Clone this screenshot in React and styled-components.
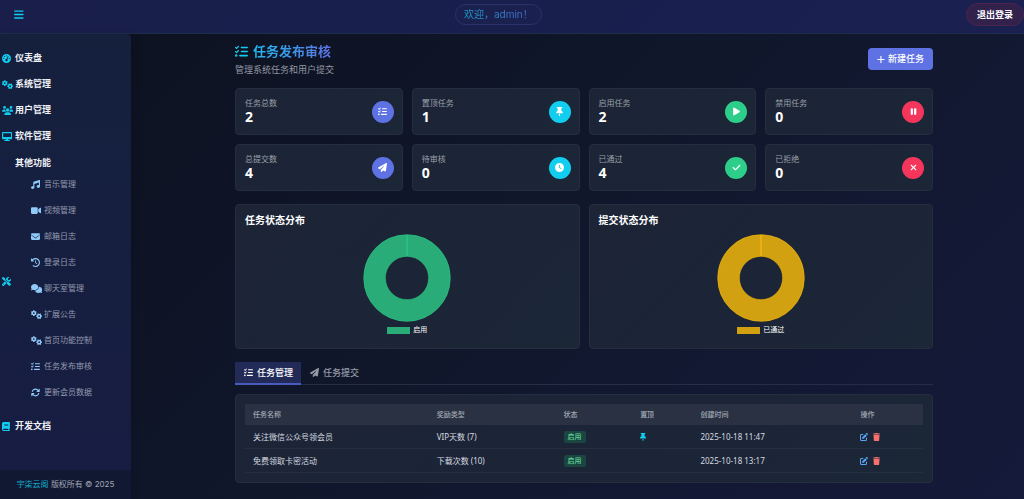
import React from "react";
import styled, { createGlobalStyle } from "styled-components";
import {
  FaBars, FaGaugeHigh, FaGears, FaUsers, FaDesktop, FaScrewdriverWrench, FaMusic, FaVideo,
  FaEnvelope, FaClockRotateLeft, FaComments, FaListCheck, FaArrowsRotate, FaBook, FaPaperPlane,
  FaThumbtack, FaPlay, FaPause, FaClock, FaCheck, FaXmark, FaPlus, FaPenToSquare, FaTrash,
} from "react-icons/fa6";

const GlobalStyle = createGlobalStyle`
  * { box-sizing: border-box; }
  body {
    margin: 0;
    color: #fff;
    background: #0d1220;
    font: 9px/12px "Noto Sans", "Noto Sans CJK SC", sans-serif;
  }
  button { font: inherit; color: inherit; border: 0; padding: 0; background: none; cursor: pointer; }
  a { color: inherit; text-decoration: none; }
  ul { list-style: none; margin: 0; padding: 0; }
  h1, h2, p { margin: 0; }
  svg { display: block; flex: none; }
`;

const Page = styled.div`
  min-height: 100vh;
  display: flex;
  flex-direction: column;
  background: linear-gradient(135deg, #0c111e 0%, #10172b 50%, #151a3a 100%);
`;

const TopBar = styled.header`
  display: flex;
  justify-content: space-between;
  align-items: center;
  padding: 3px 0 7px 7px;
  background: linear-gradient(135deg, #191f4a, #1a2050);
  border-bottom: 1px solid #1d2d4c;
  font-family: Inter, "Noto Sans CJK SC", sans-serif;
`;

const MenuButton = styled.button`
  padding: 6px 7px;
  color: #11cdef;
  svg { height: 11px; width: auto; aspect-ratio: 7 / 8; }
`;

const Welcome = styled.div`
  padding: 0 8px;
  border: 1px solid #2a336e;
  border-radius: 11px;
  background: #1a214e;
  font-size: 10px;
  line-height: 19px;
  span {
    background: linear-gradient(90deg, #1f9dc9, #4a62cc);
    background-clip: text;
    color: transparent;
  }
`;

const Logout = styled.button`
  padding: 0 10px;
  border: 1px solid #4b2450;
  border-radius: 12px;
  background: #31214b;
  font-size: 9px;
  font-weight: 700;
  line-height: 21px;
`;

const Body = styled.div`
  flex: 1;
  display: flex;
`;

const Sidebar = styled.aside`
  flex: 0 0 131px;
  display: flex;
  flex-direction: column;
  border-top-right-radius: 4px;
  background: linear-gradient(180deg, #15203d, #171d43);
  box-shadow: 2px 0 8px rgba(0, 0, 0, 0.12);
  font-family: Inter, "Noto Sans CJK SC", sans-serif;
`;

const Menu = styled.ul`
  flex: 1;
  padding: 11px 0 24px 2px;
`;

const MenuIcon = styled.span`
  width: 13px;
  color: #11cdef;
  svg { height: 9px; width: auto; aspect-ratio: ${(p) => p.$ratio || "1"}; }
`;

const MenuLink = styled.a`
  display: flex;
  align-items: center;
  height: 26px;
  font-weight: 700;
  color: #f0f2f7;
`;

const MenuGroup = styled.div`
  display: flex;
  align-items: center;
`;

const GroupLabel = styled.button`
  display: block;
  padding: 8px 0 2px;
  font-weight: 700;
  color: #f0f2f7;
`;

const SubMenu = styled.ul`
  padding: 0 0 8px 16px;
`;

const SubLink = styled.a`
  display: flex;
  align-items: center;
  height: 26px;
  font-size: 8px;
  color: #949bb0;
`;

const SubIcon = styled(MenuIcon)`
  color: #90caf9;
`;

const Copyright = styled.footer`
  padding: 8px 0 9px;
  text-align: center;
  font-size: 8px;
  background: #111831;
  color: #a2a7b5;
  a { color: #10a9cb; }
`;

const Main = styled.main`
  flex: 1;
  min-width: 0;
  padding: 8px 91px 16px 104px;
`;

const PageHead = styled.div`
  display: flex;
  justify-content: space-between;
  align-items: center;
  margin-bottom: 12px;
`;

const Title = styled.h1`
  display: flex;
  align-items: center;
  gap: 5px;
  margin-bottom: 3px;
  font-size: 13px;
  line-height: 18px;
  font-weight: 600;
  svg { height: 13px; width: auto; color: #11cdef; }
  span {
    background: linear-gradient(90deg, #22b8ee, #5e72e4);
    background-clip: text;
    color: transparent;
  }
`;

const Subtitle = styled.p`
  line-height: 13px;
  color: #9398a3;
`;

const PrimaryButton = styled.button`
  display: flex;
  align-items: center;
  gap: 3px;
  padding: 5px 9px;
  border-radius: 4px;
  background: #5e72e4;
  font-weight: 500;
  svg { height: 9px; width: auto; aspect-ratio: 7 / 8; }
`;

const Panel = styled.section`
  border: 1px solid #252e3f;
  border-radius: 4px;
  padding: 9px;
  background: linear-gradient(135deg, #1c2436, #1b2637);
`;

const StatGrid = styled.div`
  display: grid;
  grid-template-columns: repeat(4, 1fr);
  gap: 9px;
  margin-bottom: 13px;
`;

const StatCard = styled(Panel)`
  display: flex;
  justify-content: space-between;
  align-items: center;
  padding-right: 8px;
`;

const StatLabel = styled.div`
  font-size: 8px;
  line-height: 10px;
  color: #9ba0aa;
`;

const StatValue = styled.div`
  font-size: 14px;
  line-height: 17px;
  font-weight: 700;
`;

const StatIcon = styled.span`
  display: grid;
  place-items: center;
  width: 22px;
  height: 22px;
  border-radius: 50%;
  background: ${(p) => p.$color};
  svg { height: 9px; width: auto; }
`;

const ChartGrid = styled.div`
  display: grid;
  grid-template-columns: repeat(2, 1fr);
  gap: 9px;
  margin-bottom: 13px;
`;

const ChartCard = styled(Panel)`
  padding-bottom: 13px;
`;

const ChartTitle = styled.h2`
  margin-bottom: 7px;
  font-size: 10px;
  line-height: 13px;
  font-weight: 700;
`;

const Doughnut = styled.svg`
  width: 88px;
  height: 88px;
  margin: 0 auto;
`;

const Legend = styled.div`
  display: flex;
  justify-content: center;
  align-items: center;
  gap: 3px;
  margin-top: 3px;
  font-size: 7px;
  line-height: 10px;
`;

const Swatch = styled.span`
  width: 23px;
  height: 7px;
  background: ${(p) => p.$color};
`;

const Tabs = styled.div`
  display: flex;
  margin-bottom: 9px;
  box-shadow: inset 0 -1px #262d45;
`;

const Tab = styled.button`
  display: flex;
  align-items: center;
  gap: 4px;
  height: 23px;
  padding: 0 8px 0 9px;
  border-bottom: 2px solid ${(p) => (p.$active ? "#4a5bbf" : "transparent")};
  background: ${(p) => (p.$active ? "#222b58" : "none")};
  color: ${(p) => (p.$active ? "#fff" : "#9499a6")};
  font-weight: 500;
  svg { height: 9px; width: auto; }
`;

const Table = styled.table`
  width: 100%;
  table-layout: fixed;
  border-collapse: separate;
  border-spacing: 0;
  text-align: left;
  font-size: 8px;
  line-height: 11px;
  color: #d7dae0;
`;

const HeadCell = styled.th`
  width: ${(p) => p.$width};
  height: 21px;
  padding: 0 8px;
  background: #293143;
  color: #a4a9b3;
  font-size: 7px;
  font-weight: 500;
`;

const Cell = styled.td`
  height: 24px;
  padding: 0 8px;
  border-bottom: 1px solid #252f3f;
`;

const Badge = styled.span`
  display: inline-block;
  padding: 0 4px;
  border-radius: 2px;
  background: #1b4541;
  color: #62cf96;
  font-size: 7px;
  font-weight: 500;
  line-height: 12px;
  vertical-align: middle;
`;

const PinMark = styled.span`
  color: #11cdef;
  svg { height: 8px; width: auto; aspect-ratio: 3 / 4; }
`;

const Actions = styled.div`
  display: flex;
  gap: 5px;
`;

const ActionButton = styled.button`
  color: ${(p) => p.$color};
  svg { height: 8px; width: auto; aspect-ratio: ${(p) => p.$ratio || "1"}; }
`;

const mainLinks = [
  [FaGaugeHigh, "仪表盘"],
  [FaGears, "系统管理", "5 / 4"],
  [FaUsers, "用户管理", "5 / 4"],
  [FaDesktop, "软件管理", "9 / 8"],
];

const subLinks = [
  [FaMusic, "音乐管理"],
  [FaVideo, "视频管理", "9 / 8"],
  [FaEnvelope, "邮箱日志"],
  [FaClockRotateLeft, "登录日志"],
  [FaComments, "聊天室管理", "5 / 4"],
  [FaGears, "扩展公告", "5 / 4"],
  [FaGears, "首页功能控制", "5 / 4"],
  [FaListCheck, "任务发布审核"],
  [FaArrowsRotate, "更新会员数据"],
];

const stats = [
  ["任务总数", 2, FaListCheck, "#5e72e4"],
  ["置顶任务", 1, FaThumbtack, "#11cdef"],
  ["启用任务", 2, FaPlay, "#2dce89"],
  ["禁用任务", 0, FaPause, "#f5365c"],
  ["总提交数", 4, FaPaperPlane, "#5e72e4"],
  ["待审核", 0, FaClock, "#11cdef"],
  ["已通过", 4, FaCheck, "#2dce89"],
  ["已拒绝", 0, FaXmark, "#f5365c"],
];

const charts = [
  ["任务状态分布", "启用", "#2aac78", "#2dce89"],
  ["提交状态分布", "已通过", "#d1a112", "#ffc107"],
];

const columns = [
  ["任务名称", "27.1%"],
  ["奖励类型", "18.7%"],
  ["状态", "11.3%"],
  ["置顶", "8.9%"],
  ["创建时间", "23.6%"],
  ["操作", "10.4%"],
];

const tasks = [
  ["关注微信公众号领会员", "VIP天数 (7)", true, "2025-10-18 11:47"],
  ["免费领取卡密活动", "下载次数 (10)", false, "2025-10-18 13:17"],
];

function SideItem({ icon: Icon, label, ratio }) {
  return (
    <li>
      <MenuLink href="#"><MenuIcon $ratio={ratio}><Icon /></MenuIcon>{label}</MenuLink>
    </li>
  );
}

function Chart({ title, label, color, edge }) {
  return (
    <ChartCard>
      <ChartTitle>{title}</ChartTitle>
      <Doughnut viewBox="0 0 88 88" role="img" aria-label={title}>
        <circle cx="44" cy="44" r="32.5" fill="none" stroke={color} strokeWidth="22" />
        <circle cx="44" cy="44" r="43.3" fill="none" stroke={edge} strokeWidth="0.6" opacity="0.6" />
        <circle cx="44" cy="44" r="21.6" fill="none" stroke={edge} strokeWidth="0.6" opacity="0.6" />
        <path d="M44 1V22" stroke={edge} strokeWidth="1" />
      </Doughnut>
      <Legend><Swatch $color={color} />{label}</Legend>
    </ChartCard>
  );
}

export default function App() {
  return (
    <Page>
      <GlobalStyle />
      <TopBar>
        <MenuButton aria-label="菜单"><FaBars /></MenuButton>
        <Welcome><span>欢迎，admin！</span></Welcome>
        <Logout>退出登录</Logout>
      </TopBar>
      <Body>
        <Sidebar>
          <Menu>
            {mainLinks.map(([icon, label, ratio]) => (
              <SideItem key={label} icon={icon} label={label} ratio={ratio} />
            ))}
            <li>
              <MenuGroup>
                <MenuIcon><FaScrewdriverWrench /></MenuIcon>
                <div>
                  <GroupLabel>其他功能</GroupLabel>
                  <SubMenu>
                    {subLinks.map(([Icon, label, ratio]) => (
                      <li key={label}>
                        <SubLink href="#"><SubIcon $ratio={ratio}><Icon /></SubIcon>{label}</SubLink>
                      </li>
                    ))}
                  </SubMenu>
                </div>
              </MenuGroup>
            </li>
            <SideItem icon={FaBook} label="开发文档" ratio="7 / 8" />
          </Menu>
          <Copyright><a href="#">宇柒云阁</a> 版权所有 © 2025</Copyright>
        </Sidebar>
        <Main>
          <PageHead>
            <div>
              <Title><FaListCheck /><span>任务发布审核</span></Title>
              <Subtitle>管理系统任务和用户提交</Subtitle>
            </div>
            <PrimaryButton><FaPlus />新建任务</PrimaryButton>
          </PageHead>
          <StatGrid>
            {stats.map(([label, value, Icon, color]) => (
              <StatCard key={label}>
                <div>
                  <StatLabel>{label}</StatLabel>
                  <StatValue>{value}</StatValue>
                </div>
                <StatIcon $color={color}><Icon /></StatIcon>
              </StatCard>
            ))}
          </StatGrid>
          <ChartGrid>
            {charts.map(([title, label, color, edge]) => (
              <Chart key={title} title={title} label={label} color={color} edge={edge} />
            ))}
          </ChartGrid>
          <Tabs role="tablist">
            <Tab role="tab" aria-selected="true" $active><FaListCheck />任务管理</Tab>
            <Tab role="tab" aria-selected="false"><FaPaperPlane />任务提交</Tab>
          </Tabs>
          <Panel>
            <Table>
              <thead>
                <tr>
                  {columns.map(([name, width]) => <HeadCell key={name} $width={width}>{name}</HeadCell>)}
                </tr>
              </thead>
              <tbody>
                {tasks.map(([name, reward, pinned, time]) => (
                  <tr key={name}>
                    <Cell>{name}</Cell>
                    <Cell>{reward}</Cell>
                    <Cell><Badge>启用</Badge></Cell>
                    <Cell>{pinned && <PinMark><FaThumbtack /></PinMark>}</Cell>
                    <Cell>{time}</Cell>
                    <Cell>
                      <Actions>
                        <ActionButton $color="#5aa2f5" aria-label="编辑"><FaPenToSquare /></ActionButton>
                        <ActionButton $color="#f87171" $ratio="7 / 8" aria-label="删除"><FaTrash /></ActionButton>
                      </Actions>
                    </Cell>
                  </tr>
                ))}
              </tbody>
            </Table>
          </Panel>
        </Main>
      </Body>
    </Page>
  );
}
